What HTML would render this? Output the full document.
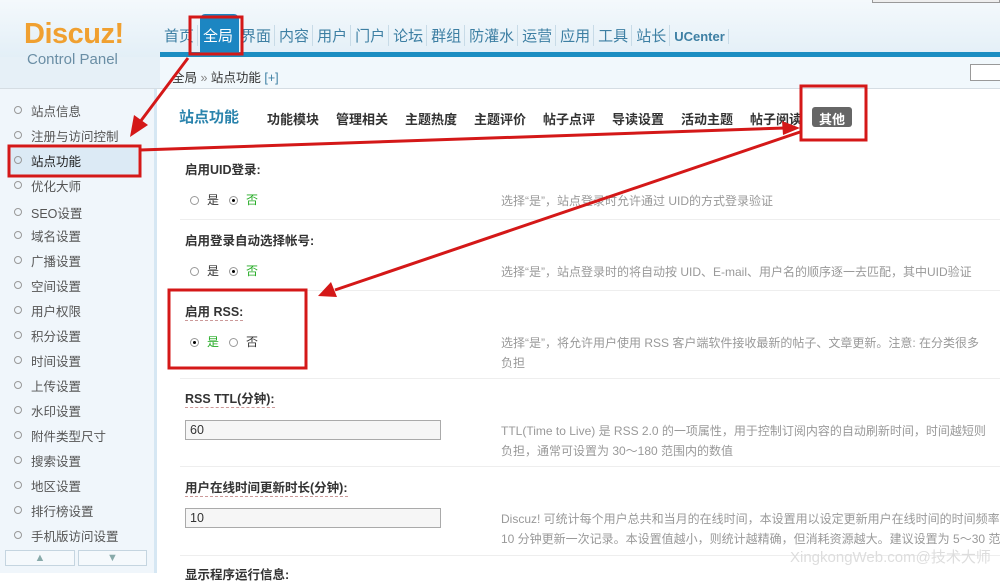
<!DOCTYPE html>
<html><head><meta charset="utf-8"><style>
*{margin:0;padding:0;box-sizing:border-box}
body{width:1000px;height:573px;overflow:hidden;position:relative;background:#fff;font-family:"Liberation Sans","Noto Sans CJK SC",sans-serif;font-size:12px;color:#333}
.a{position:absolute;white-space:nowrap}
#hd{position:absolute;left:0;top:0;width:1000px;height:57px;background:linear-gradient(#f4f9fc,#e3eff7)}
.nav{font-size:15px;color:#3d7fa3;top:25px}
.nav span{display:inline-block;padding:0 3px;border-right:1px solid #c8dbe7;margin-right:1px}
#side{position:absolute;left:0;top:89px;width:157px;height:484px;background:#f0f6fb;border-right:3px solid #d6e7f3}
.si{left:14px;font-size:12.5px;color:#555}
.si:before{content:"";display:inline-block;width:6px;height:6px;border:1px solid #999;border-radius:50%;margin-right:9px;vertical-align:2px}
.tab{top:109px;font-size:13px;font-weight:bold;color:#333}
.lb{left:185px;font-size:12.5px;font-weight:bold;color:#333}
.ds{left:501px;font-size:12px;color:#999}
.sep{position:absolute;left:180px;width:820px;height:1px;background:#eee}
.rd{display:inline-block;width:9px;height:9px;border:1px solid #999;border-radius:50%;margin-right:8px;vertical-align:-1px;position:relative}
.rd.on:after{content:"";position:absolute;left:2px;top:2px;width:3px;height:3px;background:#000;border-radius:50%}
.inp{position:absolute;left:185px;width:256px;height:20px;border:1px solid #aaa;background:#f6f6f6;font-size:12.5px;padding:2px 4px}
.g{color:#2a2}
</style></head><body>
<div id="hd"></div>
<div style="position:absolute;left:0;top:57px;width:160px;height:32px;background:#e6f0f7;border-bottom:1px solid #d5dde3"></div>
<div class="a" style="left:24px;top:18px;font-size:29px;font-weight:bold;color:#f0a030;letter-spacing:-0.5px">Discuz!</div>
<div class="a" style="left:27px;top:51px;font-size:15px;color:#6a8ea5">Control Panel</div>
<div style="position:absolute;left:200px;top:14px;width:39px;height:40px;background:#1c86c2;border-radius:5px 5px 0 0"></div>
<div class="a nav"><span style="margin-left:161px">首页</span><span style="color:#fff;border:none;padding:0 4px">全局</span><span>界面</span><span>内容</span><span>用户</span><span>门户</span><span>论坛</span><span>群组</span><span>防灌水</span><span>运营</span><span>应用</span><span>工具</span><span>站长</span><span style="font-size:13px;font-weight:bold">UCenter</span></div>
<div style="position:absolute;left:160px;top:52px;width:840px;height:5px;background:#1c8ec2"></div>
<div style="position:absolute;left:160px;top:57px;width:840px;height:32px;background:#f1f8fc;border-bottom:1px solid #d5dde3"></div>
<div class="a" style="left:172px;top:67px;font-size:12.5px;color:#333">全局 <span style="color:#888">»</span> 站点功能 <span style="color:#3d7fa3">[+]</span></div>
<div style="position:absolute;left:970px;top:64px;width:32px;height:17px;border:1px solid #999;background:#fff"></div>
<div style="position:absolute;left:872px;top:0;width:128px;height:3px;border:1px solid #999;border-top:none;background:#eee"></div>
<div id="side"></div>
<div style="position:absolute;left:8px;top:148px;width:130px;height:27px;background:#dceaf5"></div>
<div class="a si" style="top:101px">站点信息</div>
<div class="a si" style="top:126px">注册与访问控制</div>
<div class="a si" style="top:151px;color:#222">站点功能</div>
<div class="a si" style="top:176px">优化大师</div>
<div class="a si" style="top:203px">SEO设置</div>
<div class="a si" style="top:226px">域名设置</div>
<div class="a si" style="top:251px">广播设置</div>
<div class="a si" style="top:276px">空间设置</div>
<div class="a si" style="top:301px">用户权限</div>
<div class="a si" style="top:326px">积分设置</div>
<div class="a si" style="top:351px">时间设置</div>
<div class="a si" style="top:376px">上传设置</div>
<div class="a si" style="top:401px">水印设置</div>
<div class="a si" style="top:426px">附件类型尺寸</div>
<div class="a si" style="top:451px">搜索设置</div>
<div class="a si" style="top:476px">地区设置</div>
<div class="a si" style="top:501px">排行榜设置</div>
<div class="a si" style="top:526px">手机版访问设置</div>
<div style="position:absolute;left:5px;top:550px;width:70px;height:16px;border:1px solid #c5d5e0;background:#f5f9fc;color:#8aa;text-align:center;font-size:11px;line-height:14px">▲</div>
<div style="position:absolute;left:78px;top:550px;width:69px;height:16px;border:1px solid #c5d5e0;background:#f5f9fc;color:#8aa;text-align:center;font-size:11px;line-height:14px">▼</div>
<div class="a" style="left:179px;top:106px;font-size:15px;font-weight:bold;color:#2b84ad">站点功能</div>
<div class="a tab" style="left:267px">功能模块</div>
<div class="a tab" style="left:336px">管理相关</div>
<div class="a tab" style="left:405px">主题热度</div>
<div class="a tab" style="left:474px">主题评价</div>
<div class="a tab" style="left:543px">帖子点评</div>
<div class="a tab" style="left:612px">导读设置</div>
<div class="a tab" style="left:681px">活动主题</div>
<div class="a tab" style="left:750px">帖子阅读</div>
<div style="position:absolute;left:812px;top:107px;width:40px;height:20px;background:#666;border-radius:3px"></div>
<div class="a tab" style="left:819px;color:#fff">其他</div>
<div class="a lb" style="top:159px">启用UID登录:</div>
<div class="a" style="left:190px;top:191px"><i class="rd"></i>是 &nbsp; <i class="rd on"></i><span class="g">否</span></div>
<div class="a ds" style="top:192px">选择“是”，站点登录时允许通过 UID的方式登录验证</div>
<div class="sep" style="top:219px"></div>
<div class="a lb" style="top:230px">启用登录自动选择帐号:</div>
<div class="a" style="left:190px;top:262px"><i class="rd"></i>是 &nbsp; <i class="rd on"></i><span class="g">否</span></div>
<div class="a ds" style="top:263px">选择“是”，站点登录时的将自动按 UID、E-mail、用户名的顺序逐一去匹配，其中UID验证</div>
<div class="sep" style="top:290px"></div>
<div class="a lb" style="top:301px;border-bottom:1px dashed #c99">启用 RSS:</div>
<div class="a" style="left:190px;top:333px"><i class="rd on"></i><span class="g">是</span> &nbsp; <i class="rd"></i>否</div>
<div class="a ds" style="top:334px">选择“是”，将允许用户使用 RSS 客户端软件接收最新的帖子、文章更新。注意: 在分类很多</div>
<div class="a ds" style="top:354px">负担</div>
<div class="sep" style="top:378px"></div>
<div class="a lb" style="top:388px;border-bottom:1px dashed #c99">RSS TTL(分钟):</div>
<div class="inp" style="top:420px">60</div>
<div class="a ds" style="top:422px">TTL(Time to Live) 是 RSS 2.0 的一项属性，用于控制订阅内容的自动刷新时间，时间越短则</div>
<div class="a ds" style="top:442px">负担，通常可设置为 30～180 范围内的数值</div>
<div class="sep" style="top:466px"></div>
<div class="a lb" style="top:477px;border-bottom:1px dashed #c99">用户在线时间更新时长(分钟):</div>
<div class="inp" style="top:508px">10</div>
<div class="a ds" style="top:510px">Discuz! 可统计每个用户总共和当月的在线时间，本设置用以设定更新用户在线时间的时间频率</div>
<div class="a ds" style="top:530px">10 分钟更新一次记录。本设置值越小，则统计越精确，但消耗资源越大。建议设置为 5～30 范</div>
<div class="sep" style="top:555px"></div>
<div class="a lb" style="top:564px">显示程序运行信息:</div>
<div class="a" style="left:790px;top:546px;font-size:15px;color:#ddd">XingkongWeb.com@技术大师</div>
<svg style="position:absolute;left:0;top:0" width="1000" height="573">
<g fill="none" stroke="#d41818" stroke-width="3">
<rect x="190" y="17" width="52" height="37"/>
<rect x="9" y="146" width="131" height="30"/>
<rect x="801" y="86" width="65" height="54"/>
<rect x="169" y="290" width="137" height="78"/>
<line x1="188" y1="58" x2="140" y2="122"/>
<line x1="140" y1="150" x2="785" y2="128"/>
<line x1="800" y1="132" x2="335" y2="290"/>
</g>
<g fill="#d41818">
<polygon points="130,137 134,115 148,125"/>
<polygon points="800,128 782,121 783,135"/>
<polygon points="318,296 331,282 337,297"/>
</g>
</svg>
</body></html>
